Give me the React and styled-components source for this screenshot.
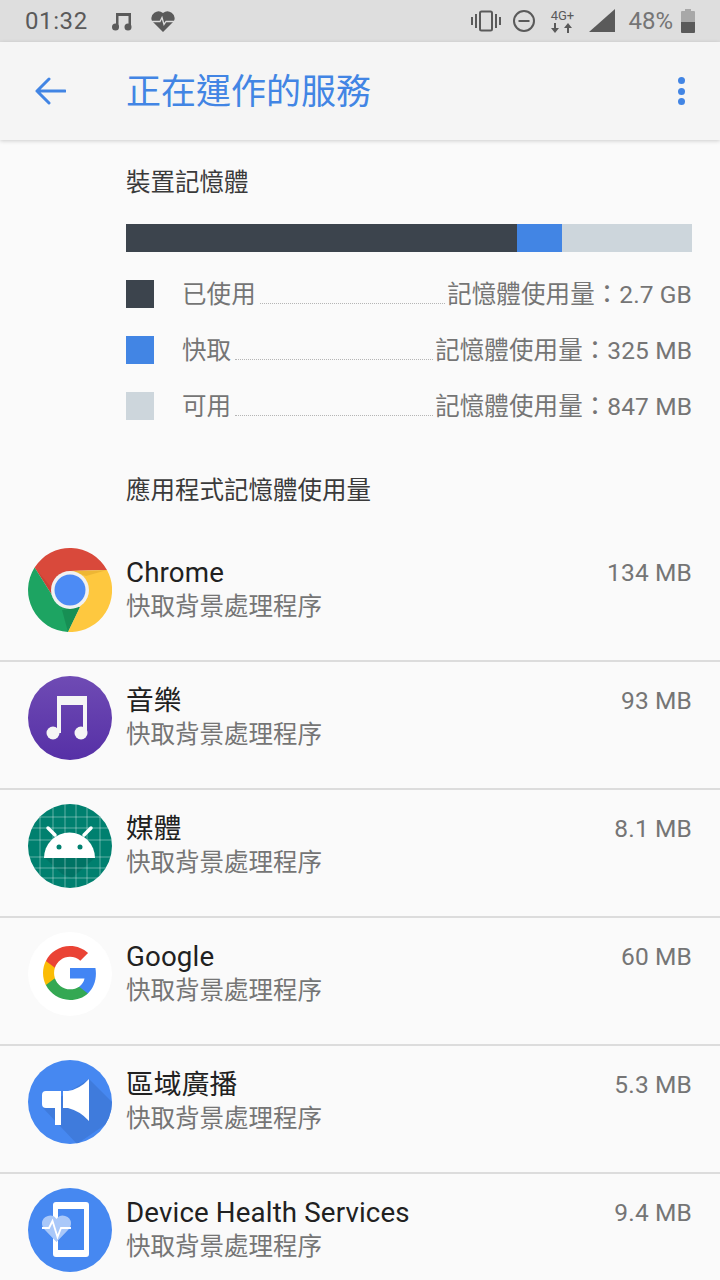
import React from "react";
import styled, { createGlobalStyle } from "styled-components";

const GlobalStyle = createGlobalStyle`
  html, body {
    margin: 0;
    padding: 0;
    width: 720px;
    height: 1280px;
    overflow: hidden;
    background: #fafafa;
    font-family: Roboto, "Noto Sans CJK TC", sans-serif;
  }
`;

const legend = [
  { label: "已使用", value: "2.7 GB", color: "#3c444d" },
  { label: "快取", value: "325 MB", color: "#4285e4" },
  { label: "可用", value: "847 MB", color: "#cdd6dc" }
];

const ChromeIcon = () => (
  <svg width="84" height="84" viewBox="0 0 84 84">
    <path d="M6.600 19.500A42 42 0 0 1 79 22L42 23 24 47z" fill="#d9493b" />
    <path d="M6.600 19.500A42 42 0 0 0 40 84L52 59 24 47z" fill="#1da462" />
    <path d="M79 22A42 42 0 0 1 40 84L52 59 42 23z" fill="#fec83f" />
    <path d="M42 23 79 22 58 28z" fill="#c98f1c" fillOpacity="0.3" />
    <path d="M52 59 40 84 34 62z" fill="#0f6b3c" fillOpacity="0.35" />
    <path d="M24 47 6.600 19.500 22 38z" fill="#8e2a20" fillOpacity="0.2" />
    <circle cx="42" cy="42" r="19" fill="#f1f1f1" />
    <circle cx="42" cy="42" r="15.500" fill="#4c8bf5" />
  </svg>
);

const MusicIcon = () => (
  <svg width="84" height="84" viewBox="0 0 84 84">
    <defs>
      <linearGradient id="music" x1="0" y1="0" x2="0" y2="1">
        <stop offset="0" stopColor="#6f4bb4" />
        <stop offset="1" stopColor="#5630a6" />
      </linearGradient>
    </defs>
    <circle cx="42" cy="42" r="42" fill="url(#music)" />
    <path d="M29 20h30v37h-4V29H33v28h-4z" fill="#f5f5f5" />
    <circle cx="25" cy="57" r="6.500" fill="#f5f5f5" />
    <circle cx="53" cy="57" r="6.500" fill="#f5f5f5" />
  </svg>
);

const gridX = [12, 25, 37, 48, 59, 72];
const gridY = [13, 24, 36, 53, 64, 74];

const AndroidIcon = () => (
  <svg width="84" height="84" viewBox="0 0 84 84">
    <defs>
      <clipPath id="disc">
        <circle cx="42" cy="42" r="42" />
      </clipPath>
    </defs>
    <circle cx="42" cy="42" r="42" fill="#00806f" />
    <g clipPath="url(#disc)">
      <path d="M17 54h50L44 74 34 70z" fill="#00574b" fillOpacity="0.3" />
      <g stroke="#ffffff" strokeOpacity="0.38" strokeWidth="1">
        {gridX.map((p) => (
          <line key={p} x1={p} y1="0" x2={p} y2="84" />
        ))}
        {gridY.map((p) => (
          <line key={p} x1="0" y1={p} x2="84" y2={p} />
        ))}
      </g>
    </g>
    <path d="M16 54a25.500 25.500 0 0 1 51 0z" fill="#fff" />
    <path d="M27 31 20 24M56 31l7-7" stroke="#fff" strokeWidth="3.500" strokeLinecap="round" />
    <circle cx="31" cy="43" r="2.500" fill="#00806f" />
    <circle cx="52" cy="43" r="2.500" fill="#00806f" />
  </svg>
);

const GoogleIcon = () => (
  <svg width="84" height="84" viewBox="0 0 84 84">
    <circle cx="42" cy="42" r="42" fill="#fff" />
    <g transform="translate(12.550 11.550) scale(1.227)">
      <path d="M45.120 24.500c0-1.560-.14-3.060-.4-4.500H24v8.510h11.840c-.51 2.750-2.060 5.080-4.390 6.640v5.520h7.110c4.160-3.830 6.560-9.470 6.560-16.170z" fill="#4285f4" />
      <path d="M24 46c5.940 0 10.920-1.970 14.560-5.330l-7.110-5.520c-1.970 1.320-4.490 2.100-7.450 2.100-5.730 0-10.580-3.870-12.310-9.070H4.340v5.700C7.960 41.070 15.400 46 24 46z" fill="#34a853" />
      <path d="M11.690 28.180C11.250 26.860 11 25.450 11 24s.25-2.860.69-4.180v-5.700H4.340C2.850 17.090 2 20.450 2 24c0 3.550.85 6.910 2.340 9.880l7.350-5.700z" fill="#fbbc05" />
      <path d="M24 10.750c3.230 0 6.130 1.110 8.410 3.290l6.310-6.310C34.910 4.180 29.930 2 24 2 15.400 2 7.960 6.930 4.340 14.120l7.350 5.700c1.730-5.200 6.580-9.070 12.310-9.070z" fill="#ea4335" />
    </g>
  </svg>
);

const BroadcastIcon = () => (
  <svg width="84" height="84" viewBox="0 0 84 84">
    <defs>
      <clipPath id="broadcast">
        <circle cx="42" cy="42" r="42" />
      </clipPath>
    </defs>
    <circle cx="42" cy="42" r="42" fill="#4688f1" />
    <path d="M15 48 49 84 84 60 84 42 61 19z" fill="#3f7bdc" clipPath="url(#broadcast)" />
    <path d="M18 31h15v34h-6V48h-9q-4 0-4-4v-9q0-4 4-4z" fill="#fff" />
    <path d="M35 31h5q12-2 21-12v42q-9-10-21-13h-5z" fill="#fff" />
  </svg>
);

const HealthIcon = () => (
  <svg width="84" height="84" viewBox="0 0 84 84">
    <circle cx="42" cy="42" r="42" fill="#4688f1" />
    <path d="M28 14h30a3 3 0 0 1 3 3v49a3 3 0 0 1-3 3H28a3 3 0 0 1-3-3V17a3 3 0 0 1 3-3zM30 21v41h26V21z" fill="#fff" fillRule="evenodd" />
    <path d="M28.500 54 17 42a9 9 0 0 1-3-7 8 8 0 0 1 14.500-4 8 8 0 0 1 14.500 4 9 9 0 0 1-3 7z" fill="#a9c8f9" />
    <path d="M14 40h7l3.500-7 5 16 3.500-9h10" fill="none" stroke="#fff" strokeWidth="1.800" />
  </svg>
);

const apps = [
  { name: "Chrome", size: "134 MB", Icon: ChromeIcon },
  { name: "音樂", size: "93 MB", Icon: MusicIcon, cjk: true },
  { name: "媒體", size: "8.1 MB", Icon: AndroidIcon, cjk: true },
  { name: "Google", size: "60 MB", Icon: GoogleIcon },
  { name: "區域廣播", size: "5.3 MB", Icon: BroadcastIcon, cjk: true },
  { name: "Device Health Services", size: "9.4 MB", Icon: HealthIcon }
];

const App = () => {
  return (
    <Page>
      <GlobalStyle />
      <StatusBar>
        <StatusGroup>
          <Clock>01:32</Clock>
          <svg width="22" height="22" viewBox="0 0 22 22">
            <path d="M5 3h15v14h-2.500V6H7.500v11H5z" fill="#5a5a5a" />
            <circle cx="4.500" cy="17" r="3.500" fill="#5a5a5a" />
            <circle cx="17" cy="17" r="3.500" fill="#5a5a5a" />
          </svg>
          <HeartIcon width="26" height="24" viewBox="0 0 26 24">
            <path d="M13 23 2 12A7 7 0 0 1 13 4a7 7 0 0 1 11 8z" fill="#5a5a5a" />
            <path d="M1 12.500h9l2-4 2 7 2-3h9" fill="none" stroke="#dedede" strokeWidth="1.300" />
          </HeartIcon>
        </StatusGroup>
        <StatusGroup>
          <svg width="30" height="22" viewBox="0 0 30 22">
            <path d="M0 7h2v8H0zM4 4h2v14H4zM24 4h2v14h-2zM28 7h2v8h-2z" fill="#5a5a5a" />
            <rect x="9" y="1.500" width="12" height="19" rx="1.500" fill="none" stroke="#5a5a5a" strokeWidth="2" />
          </svg>
          <DndIcon width="24" height="24" viewBox="0 0 24 24">
            <circle cx="12" cy="12" r="10" fill="none" stroke="#5a5a5a" strokeWidth="2" />
            <rect x="6.500" y="11" width="11" height="2" fill="#5a5a5a" />
          </DndIcon>
          <NetworkBox>
            <NetworkText>4G+</NetworkText>
            <svg width="24" height="11" viewBox="0 0 24 11">
              <path d="M4 0h2v5h3l-4 5-4-5h3zM17 10h2V5h3l-4-5-4 5h3z" fill="#5a5a5a" />
            </svg>
          </NetworkBox>
          <SignalIcon width="26" height="24" viewBox="0 0 26 24">
            <path d="M26 0v23H0z" fill="#5a5a5a" />
          </SignalIcon>
          <Battery>48%</Battery>
          <svg width="14" height="24" viewBox="0 0 14 24">
            <path d="M4 0h6v2h3a1 1 0 0 1 1 1v10H0V3a1 1 0 0 1 1-1h3z" fill="#a8a8a8" />
            <path d="M0 13h14v10a1 1 0 0 1-1 1H1a1 1 0 0 1-1-1z" fill="#5a5a5a" />
          </svg>
        </StatusGroup>
      </StatusBar>

      <AppBar>
        <BackIcon width="32" height="30" viewBox="0 0 32 30">
          <path d="M31 15H3M15 3 3 15l12 12" fill="none" stroke="#4285e4" strokeWidth="3" strokeLinecap="round" strokeLinejoin="round" />
        </BackIcon>
        <Title>正在運作的服務</Title>
        <MoreButton>
          <Dot />
          <Dot />
          <Dot />
        </MoreButton>
      </AppBar>

      <MemorySection>
        <SectionTitle>裝置記憶體</SectionTitle>
        <UsageBar>
          <UsageSegment $color="#3c444d" $width={391} />
          <UsageSegment $color="#4285e4" $width={45} />
          <UsageSegment $color="#cdd6dc" $width={130} />
        </UsageBar>
        <Legend>
          {legend.map((item) => (
            <LegendRow key={item.label}>
              <Swatch $color={item.color} />
              <LegendLabel>{item.label}</LegendLabel>
              <Leader />
              <LegendValue>記憶體使用量：{item.value}</LegendValue>
            </LegendRow>
          ))}
        </Legend>
      </MemorySection>

      <AppsTitle>應用程式記憶體使用量</AppsTitle>

      <AppList>
        {apps.map(({ name, size, Icon, cjk }) => (
          <AppRow key={name}>
            <AppIcon>
              <Icon />
            </AppIcon>
            <AppText>
              <AppHead>
                <AppName $cjk={cjk}>{name}</AppName>
                <AppSize>{size}</AppSize>
              </AppHead>
              <AppState>快取背景處理程序</AppState>
            </AppText>
          </AppRow>
        ))}
      </AppList>
    </Page>
  );
};

/**
 *
 * Styled Components
 *
 */
const Page = styled.div`
  width: 720px;
  height: 1280px;
  overflow: hidden;
  background: #fafafa;
`;

const StatusBar = styled.div`
  height: 42px;
  background: #dedede;
  display: flex;
  align-items: center;
  justify-content: space-between;
  padding: 0 25px;
`;

const StatusGroup = styled.div`
  display: flex;
  align-items: center;
  color: #5a5a5a;
`;

const Clock = styled.span`
  font-size: 24px;
  font-weight: 400;
  color: #5a5a5a;
  width: 86px;
  letter-spacing: 0.6px;
`;

const HeartIcon = styled.svg`
  margin-left: 17px;
`;

const DndIcon = styled.svg`
  margin-left: 11px;
`;

const NetworkBox = styled.div`
  display: flex;
  flex-direction: column;
  align-items: center;
  width: 26px;
  margin-left: 13px;
`;

const NetworkText = styled.span`
  font-size: 13px;
  line-height: 13px;
  font-weight: 400;
  color: #5a5a5a;
  margin-bottom: 1px;
`;

const SignalIcon = styled.svg`
  margin-left: 14px;
`;

const Battery = styled.span`
  font-size: 24px;
  font-weight: 400;
  color: #757575;
  margin: 0 8px 0 13px;
`;

const AppBar = styled.div`
  height: 98px;
  background: #f5f5f5;
  box-shadow: 0 1px 4px rgba(0, 0, 0, 0.18);
  display: flex;
  align-items: center;
  position: relative;
  padding: 0 35px 0 34px;
`;

const BackIcon = styled.svg`
  flex: none;
  margin-right: 60px;
`;

const Title = styled.h1`
  flex: 1;
  margin: 0 0 6px;
  font-size: 35px;
  font-weight: 400;
  color: #4285e4;
`;

const MoreButton = styled.div`
  display: flex;
  flex-direction: column;
  gap: 3.5px;
`;

const Dot = styled.span`
  display: block;
  width: 7px;
  height: 7px;
  border-radius: 50%;
  background: #4285e4;
`;

const MemorySection = styled.section`
  padding: 24px 28px 0 126px;
`;

const SectionTitle = styled.h2`
  margin: 0;
  font-size: 24.5px;
  line-height: 38px;
  font-weight: 400;
  color: #3a3a3a;
`;

const UsageBar = styled.div`
  display: flex;
  height: 28px;
  margin-top: 22px;
`;

const UsageSegment = styled.div`
  width: ${(p) => p.$width}px;
  background: ${(p) => p.$color};
`;

const Legend = styled.div`
  display: flex;
  flex-direction: column;
  gap: 28px;
  margin-top: 28px;
`;

const LegendRow = styled.div`
  display: flex;
  align-items: center;
  height: 28px;
  font-size: 24.5px;
  letter-spacing: 0.1px;
  color: #757575;
`;

const Swatch = styled.span`
  flex: none;
  width: 28px;
  height: 28px;
  background: ${(p) => p.$color};
  margin-right: 28px;
`;

const LegendLabel = styled.span`
  flex: none;
  margin-bottom: 4px;
`;

const Leader = styled.span`
  flex: 1;
  align-self: flex-end;
  margin: 0 2px 4px 4px;
  border-bottom: 1px dotted #b5b5b5;
`;

const LegendValue = styled.span`
  flex: none;
  margin-bottom: 4px;
`;

const AppsTitle = styled.h2`
  margin: 52px 0 0;
  padding-left: 126px;
  font-size: 24.5px;
  line-height: 38px;
  font-weight: 400;
  color: #3a3a3a;
`;

const AppList = styled.div`
  margin-top: 24px;
`;

const AppRow = styled.div`
  height: 128px;
  box-sizing: border-box;
  display: flex;
  padding: 14px 28px 0;
  border-bottom: 2px solid #dcdcdc;
`;

const AppIcon = styled.div`
  flex: none;
  width: 84px;
  height: 84px;
  margin-right: 14px;
`;

const AppText = styled.div`
  flex: 1;
  min-width: 0;
`;

const AppHead = styled.div`
  display: flex;
  justify-content: space-between;
  align-items: center;
  height: 48px;
`;

const AppName = styled.span`
  font-size: 27.7px;
  letter-spacing: 0.14px;
  color: #212121;
  margin-bottom: ${(p) => (p.$cjk ? 4 : 0)}px;
`;

const AppSize = styled.span`
  font-size: 24.5px;
  letter-spacing: 0.15px;
  color: #757575;
`;

const AppState = styled.div`
  font-size: 24.5px;
  line-height: 38px;
  color: #757575;
  margin-top: -8px;
`;

export default App;
